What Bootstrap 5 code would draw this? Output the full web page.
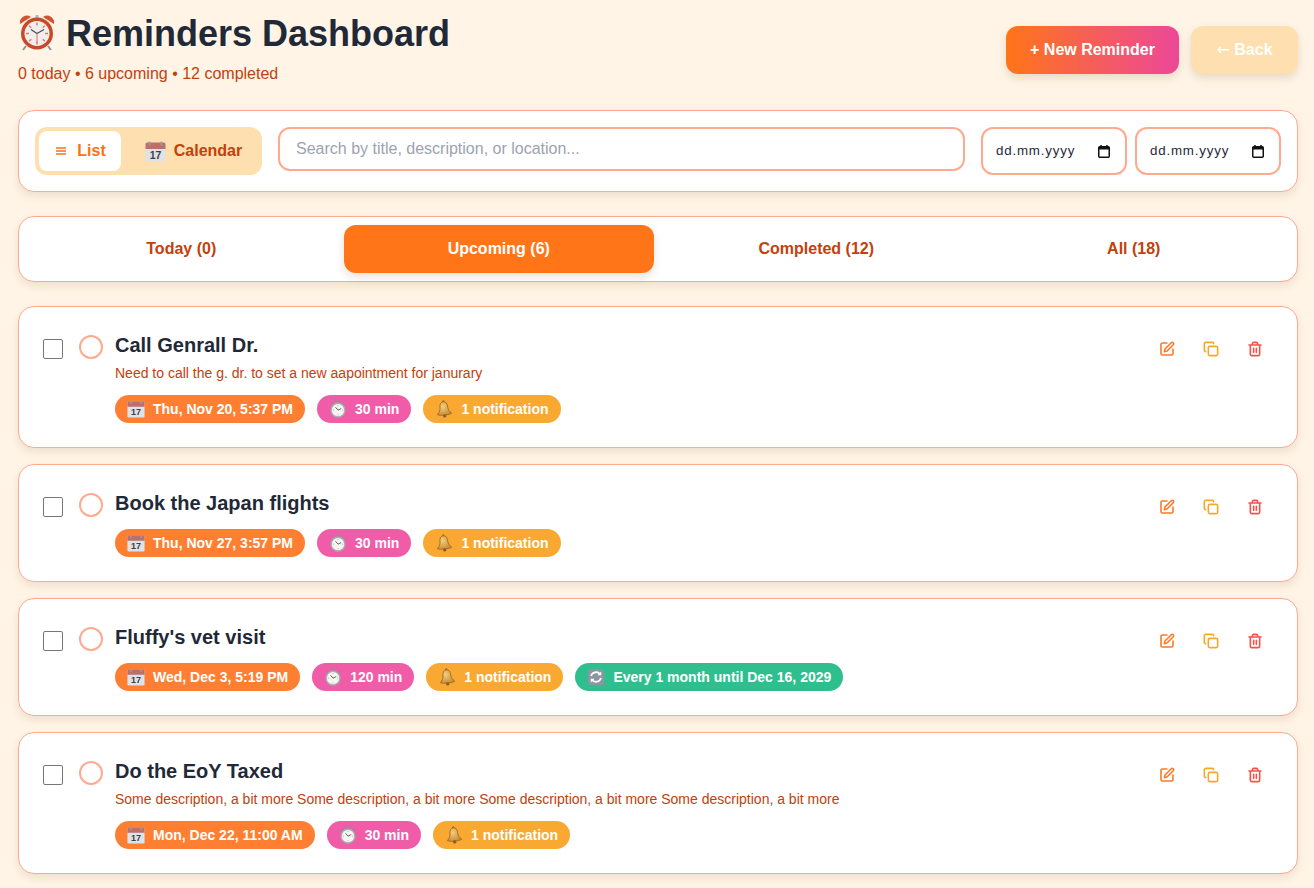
<!DOCTYPE html>
<html lang="en">
<head>
<meta charset="utf-8">
<title>Reminders Dashboard</title>
<link rel="stylesheet" href="https://cdn.jsdelivr.net/npm/bootstrap@5.3.0/dist/css/bootstrap.min.css">
<style>
body{background:#fff4e6;font-family:"Liberation Sans",Arial,sans-serif;color:#1f2937;}
.page-wrap{padding:13px 16px 14px 18px;}
.head-zone{height:97px;}
.head-title{font-size:36px;line-height:40px;font-weight:700;color:#1f2937;margin:0;}
.head-sub{font-size:16px;line-height:24px;color:#c2410c;margin:8px 0 0;}
.alarm-ico{width:38px;height:38px;margin-right:10px;vertical-align:-5px;}
.head-actions{padding-top:13px;}
.act-btn{height:48px;border:0;border-radius:12px;color:#fff;font-weight:700;font-size:16px;box-shadow:0 4px 8px rgba(120,80,40,.16);padding:0;}
.act-new{width:173px;background:linear-gradient(90deg,#ff7518,#ec4899);}
.act-back{width:107px;background:#fedfb0;}
.arrow-glyph{font-family:"DejaVu Sans",sans-serif;font-weight:400;}
.panel-box{background:#fff;border:1px solid #ffa98f;border-radius:16px;box-shadow:0 4px 8px rgba(120,80,40,.12);}
.tool-box{padding:16px;margin-bottom:24px;height:82px;}
.view-toggle{background:#fedfb0;border-radius:12px;padding:4px;height:48px;width:227px;flex:none;gap:8px;}
.view-opt{height:40px;border:0;border-radius:8px;background:transparent;font-weight:700;font-size:16px;color:#c2410c;padding:0;}
.view-opt.on{background:#fff;color:#f97316;width:82px;padding-left:2px;}
.view-opt.off{width:129px;}
.menu-ico{width:10px;height:8px;margin-right:11px;}
.cal-ico{width:18px;height:18px;flex:none;}
.cal-lg{width:21px;height:21px;margin-right:8px;}
.find-input{height:44px;border:2px solid #ffa98f;border-radius:12px;font-size:16px;padding:0 16px;color:#1f2937;margin:0 16px;width:687px;align-self:flex-start;}
.find-input::placeholder{color:#9ca3af;}
.day-field{height:48px;width:146px;border:2px solid #ffa98f;border-radius:12px;padding:0 15px 0 13px;background:#fff;}
.day-text{width:100%;min-width:0;border:0;outline:0;padding:0;background:transparent;font-size:13.33px;letter-spacing:.8px;color:#1f2937;}
.day-text::placeholder{color:#1f2937;opacity:1;}
.day-pick{width:12px;height:13px;flex:none;}
.tab-box{padding:8px 8.5px 8px 7.5px;margin-bottom:24px;height:66px;}
.tab-opt{flex:1 1 0;height:48px;border:0;border-radius:12px;background:transparent;color:#c2410c;font-weight:700;font-size:16px;}
.tab-opt.on{background:#ff7518;color:#fff;box-shadow:0 4px 8px rgba(120,80,40,.16);}
.item-box{padding:24px;margin-bottom:16px;}
.item-check{width:20px;height:20px;margin:8px 16px 0 0;border:1px solid #767676;border-radius:2px;flex:none;background:#fff;display:block;appearance:none;}
.item-ring{width:24px;height:24px;border:2px solid #ffa98f;border-radius:50%;margin:4px 12px 0 0;flex:none;background:#fff;}
.item-name{font-size:20px;line-height:28px;font-weight:700;color:#1f2937;margin:0;}
.item-note{font-size:14px;line-height:20px;color:#c2410c;margin:4px 0 0;}
.tag-pill{height:28px;border-radius:14px;padding:0 12px;color:#fff;font-size:14px;font-weight:700;white-space:nowrap;}
.tag-pill svg{margin-right:8px;}
.pill-date{background:#ff7f32;}
.pill-dur{background:#f05ca8;}
.pill-note{background:#f9a832;}
.pill-rep{background:#2fbf8f;}
.tool-btn{width:36px;height:36px;border:0;background:transparent;padding:0;}
.tool-btn svg{width:16px;height:16px;display:block;}
.clr-edit{color:#fb7a28;}
.clr-copy{color:#f9a825;}
.clr-del{color:#f5524a;}
</style>
</head>
<body>
<svg width="0" height="0" class="position-absolute">
<defs>
<radialGradient id="g-bell" cx="40%" cy="35%" r="70%"><stop offset="0" stop-color="#f3cf7c"/><stop offset="1" stop-color="#c98a35"/></radialGradient>
<symbol id="e-cal" viewBox="0 0 20 20">
<rect x="0.500" y="1.500" width="19" height="18" rx="1.500" fill="#dfe2e6"/>
<path d="M.5 3A1.500 1.500 0 0 1 2 1.500h16A1.500 1.500 0 0 1 19.500 3v4.500H.5z" fill="#b9716a"/>
<rect x="3.500" y="0.500" width="1.600" height="4" fill="#9a9ea3"/><rect x="14.900" y="0.500" width="1.600" height="4" fill="#9a9ea3"/>
<text x="10" y="17" font-family="Liberation Sans" font-size="10" text-anchor="middle" fill="#3c4148">17</text>
</symbol>
<symbol id="e-watch" viewBox="0 0 20 20">
<rect x="8.300" y="0.300" width="3.400" height="2.500" rx=".6" fill="#8d9094"/>
<path d="M15.200 2.800l2.300 2.300-1.200 1.200-2.300-2.300zM4.800 2.800L2.500 5.100l1.200 1.200 2.300-2.300z" fill="#8d9094"/>
<circle cx="10" cy="11.300" r="8.400" fill="#a9acb0"/><circle cx="10" cy="11.300" r="6.800" fill="#f7f5f0"/>
<path d="M10 11.300L7.200 8M10 11.300l3.600-1.800" stroke="#55585c" stroke-width="1" fill="none"/>
<path d="M10 5.500v1.300M10 15.800v1.300M4.200 11.300h1.300M14.500 11.300h1.300" stroke="#9a9da1" stroke-width=".8"/>
</symbol>
<symbol id="e-bell" viewBox="0 0 20 20">
<g transform="rotate(-6 10 10)">
<rect x="8.600" y=".4" width="2.800" height="2.600" rx="1" fill="#a8702c"/>
<path d="M10 2c-3 0-4.200 2.500-4.200 5.200 0 3.800-1.300 6-3.800 8.300 2.500 1.700 13.500 1.700 16 0-2.500-2.300-3.800-4.500-3.800-8.300C14.200 4.500 13 2 10 2z" fill="url(#g-bell)" stroke="#9c6526" stroke-width=".9"/>
<circle cx="10" cy="17.700" r="1.900" fill="#8f5d25"/>
</g>
</symbol>
<symbol id="e-rep" viewBox="0 0 20 20">
<rect x="1" y="1" width="18" height="18" rx="3" fill="#8b96a3"/>
<path d="M4.500 9a5.600 5.600 0 0 1 10-2M15.500 11a5.600 5.600 0 0 1-10 2" stroke="#fff" stroke-width="1.900" fill="none"/>
<path d="M15.800 3.800v4.200h-4.200zM4.200 16.200v-4.200h4.200z" fill="#fff"/>
</symbol>
<symbol id="i-edit" viewBox="0 0 24 24"><path d="M12 3H5a2 2 0 0 0-2 2v14a2 2 0 0 0 2 2h14a2 2 0 0 0 2-2v-7" fill="none" stroke="currentColor" stroke-width="2.400" stroke-linecap="round" stroke-linejoin="round"/><path d="M18.400 2.600a2.100 2.100 0 1 1 3 3L12 15l-4 1 1-4z" fill="none" stroke="currentColor" stroke-width="2.400" stroke-linecap="round" stroke-linejoin="round"/></symbol>
<symbol id="i-copy" viewBox="0 0 24 24"><rect x="8" y="8" width="14" height="14" rx="2.500" fill="none" stroke="currentColor" stroke-width="2.400"/><path d="M4 16c-1.100 0-2-.9-2-2V4c0-1.100.9-2 2-2h10c1.100 0 2 .9 2 2" fill="none" stroke="currentColor" stroke-width="2.400" stroke-linecap="round"/></symbol>
<symbol id="i-del" viewBox="0 0 24 24"><path d="M3 6h18M19 6v14a2 2 0 0 1-2 2H7a2 2 0 0 1-2-2V6M8 6V4a2 2 0 0 1 2-2h4a2 2 0 0 1 2 2v2M10 11v6M14 11v6" fill="none" stroke="currentColor" stroke-width="2.400" stroke-linecap="round" stroke-linejoin="round"/></symbol>
<symbol id="i-pick" viewBox="0 0 12 13"><path d="M3 0v2M9 0v2" stroke="#111" stroke-width="1.500"/><rect x=".75" y="1.750" width="10.500" height="10.500" rx="1" fill="none" stroke="#111" stroke-width="1.500"/><rect x="1" y="2" width="10" height="2.500" fill="#111"/></symbol>
</defs>
</svg>
<div class="page-wrap">
  <header class="head-zone d-flex justify-content-between align-items-start">
    <div>
      <h1 class="head-title">
        <svg class="alarm-ico" viewBox="0 0 38 38" aria-hidden="true">
          <path d="M8 33l-3 4M30 33l3 4" stroke="#8f9499" stroke-width="2"/>
          <path d="M2 11a7 7 0 0 1 11-7zM36 11a7 7 0 0 0-11-7z" fill="#d4532f"/>
          <rect x="17.500" y="2" width="3" height="4" fill="#b3b6ba"/>
          <circle cx="19" cy="20.500" r="16" fill="#c8492a"/>
          <circle cx="19" cy="20.500" r="12.500" fill="#f1efed"/>
          <path d="M19 9.500v3M19 28.500v3M8 20.500h3M27 20.500h3M11.200 12.700l2 2M26.800 12.700l-2 2M11.200 28.300l2-2M26.800 28.300l-2-2" stroke="#e0795f" stroke-width="1.400"/>
          <path d="M19 20.500l-6-4M19 20.500l7-4" stroke="#4a4f57" stroke-width="1.300" fill="none"/>
          <path d="M19 20.500v9" stroke="#d4532f" stroke-width=".8"/>
        </svg>Reminders Dashboard</h1>
      <p class="head-sub">0 today • 6 upcoming • 12 completed</p>
    </div>
    <div class="head-actions d-flex gap-2">
      <button class="act-btn act-new btn" type="button">+ New Reminder</button>
      <button class="act-btn act-back btn ms-1" type="button"><span class="arrow-glyph">←</span> Back</button>
    </div>
  </header>

  <section class="panel-box tool-box d-flex align-items-start">
    <div class="view-toggle d-flex">
      <button class="view-opt on d-flex align-items-center justify-content-center" type="button">
        <svg class="menu-ico" viewBox="0 0 10 8" aria-hidden="true"><path d="M0 1h10M0 4h10M0 7h10" stroke="#f97316" stroke-width="1.400"/></svg>List</button>
      <button class="view-opt off d-flex align-items-center justify-content-center" type="button">
        <svg class="cal-lg" aria-hidden="true"><use href="#e-cal"/></svg>Calendar</button>
    </div>
    <input class="find-input form-control" type="text" placeholder="Search by title, description, or location...">
    <div class="d-flex gap-2">
      <div class="day-field d-flex align-items-center"><input class="day-text" type="text" placeholder="dd.mm.yyyy" aria-label="From"><svg class="day-pick" aria-hidden="true"><use href="#i-pick"/></svg></div>
      <div class="day-field d-flex align-items-center"><input class="day-text" type="text" placeholder="dd.mm.yyyy" aria-label="To"><svg class="day-pick" aria-hidden="true"><use href="#i-pick"/></svg></div>
    </div>
  </section>

  <nav class="panel-box tab-box d-flex gap-2">
    <button class="tab-opt" type="button">Today (0)</button>
    <button class="tab-opt on" type="button">Upcoming (6)</button>
    <button class="tab-opt" type="button">Completed (12)</button>
    <button class="tab-opt" type="button">All (18)</button>
  </nav>

  <article class="panel-box item-box d-flex">
    <input class="item-check" type="checkbox" aria-label="Select">
    <div class="item-ring"></div>
    <div class="flex-grow-1">
      <h3 class="item-name">Call Genrall Dr.</h3>
      <p class="item-note">Need to call the g. dr. to set a new aapointment for janurary</p>
      <div class="d-flex gap-2 mt-2 pt-1">
        <span class="tag-pill pill-date d-inline-flex align-items-center"><svg class="cal-ico"><use href="#e-cal"/></svg>Thu, Nov 20, 5:37 PM</span>
        <span class="tag-pill pill-dur d-inline-flex align-items-center ms-1"><svg class="cal-ico"><use href="#e-watch"/></svg>30 min</span>
        <span class="tag-pill pill-note d-inline-flex align-items-center ms-1"><svg class="cal-ico"><use href="#e-bell"/></svg>1 notification</span>
      </div>
    </div>
    <div class="d-flex gap-2">
      <button class="tool-btn clr-edit d-flex align-items-center justify-content-center" type="button" aria-label="Edit"><svg><use href="#i-edit"/></svg></button>
      <button class="tool-btn clr-copy d-flex align-items-center justify-content-center" type="button" aria-label="Copy"><svg><use href="#i-copy"/></svg></button>
      <button class="tool-btn clr-del d-flex align-items-center justify-content-center" type="button" aria-label="Delete"><svg><use href="#i-del"/></svg></button>
    </div>
  </article>

  <article class="panel-box item-box d-flex">
    <input class="item-check" type="checkbox" aria-label="Select">
    <div class="item-ring"></div>
    <div class="flex-grow-1">
      <h3 class="item-name">Book the Japan flights</h3>
      <div class="d-flex gap-2 mt-2 pt-1">
        <span class="tag-pill pill-date d-inline-flex align-items-center"><svg class="cal-ico"><use href="#e-cal"/></svg>Thu, Nov 27, 3:57 PM</span>
        <span class="tag-pill pill-dur d-inline-flex align-items-center ms-1"><svg class="cal-ico"><use href="#e-watch"/></svg>30 min</span>
        <span class="tag-pill pill-note d-inline-flex align-items-center ms-1"><svg class="cal-ico"><use href="#e-bell"/></svg>1 notification</span>
      </div>
    </div>
    <div class="d-flex gap-2">
      <button class="tool-btn clr-edit d-flex align-items-center justify-content-center" type="button" aria-label="Edit"><svg><use href="#i-edit"/></svg></button>
      <button class="tool-btn clr-copy d-flex align-items-center justify-content-center" type="button" aria-label="Copy"><svg><use href="#i-copy"/></svg></button>
      <button class="tool-btn clr-del d-flex align-items-center justify-content-center" type="button" aria-label="Delete"><svg><use href="#i-del"/></svg></button>
    </div>
  </article>

  <article class="panel-box item-box d-flex">
    <input class="item-check" type="checkbox" aria-label="Select">
    <div class="item-ring"></div>
    <div class="flex-grow-1">
      <h3 class="item-name">Fluffy's vet visit</h3>
      <div class="d-flex gap-2 mt-2 pt-1">
        <span class="tag-pill pill-date d-inline-flex align-items-center"><svg class="cal-ico"><use href="#e-cal"/></svg>Wed, Dec 3, 5:19 PM</span>
        <span class="tag-pill pill-dur d-inline-flex align-items-center ms-1"><svg class="cal-ico"><use href="#e-watch"/></svg>120 min</span>
        <span class="tag-pill pill-note d-inline-flex align-items-center ms-1"><svg class="cal-ico"><use href="#e-bell"/></svg>1 notification</span>
        <span class="tag-pill pill-rep d-inline-flex align-items-center ms-1"><svg class="cal-ico"><use href="#e-rep"/></svg>Every 1 month until Dec 16, 2029</span>
      </div>
    </div>
    <div class="d-flex gap-2">
      <button class="tool-btn clr-edit d-flex align-items-center justify-content-center" type="button" aria-label="Edit"><svg><use href="#i-edit"/></svg></button>
      <button class="tool-btn clr-copy d-flex align-items-center justify-content-center" type="button" aria-label="Copy"><svg><use href="#i-copy"/></svg></button>
      <button class="tool-btn clr-del d-flex align-items-center justify-content-center" type="button" aria-label="Delete"><svg><use href="#i-del"/></svg></button>
    </div>
  </article>

  <article class="panel-box item-box d-flex">
    <input class="item-check" type="checkbox" aria-label="Select">
    <div class="item-ring"></div>
    <div class="flex-grow-1">
      <h3 class="item-name">Do the EoY Taxed</h3>
      <p class="item-note">Some description, a bit more Some description, a bit more Some description, a bit more Some description, a bit more</p>
      <div class="d-flex gap-2 mt-2 pt-1">
        <span class="tag-pill pill-date d-inline-flex align-items-center"><svg class="cal-ico"><use href="#e-cal"/></svg>Mon, Dec 22, 11:00 AM</span>
        <span class="tag-pill pill-dur d-inline-flex align-items-center ms-1"><svg class="cal-ico"><use href="#e-watch"/></svg>30 min</span>
        <span class="tag-pill pill-note d-inline-flex align-items-center ms-1"><svg class="cal-ico"><use href="#e-bell"/></svg>1 notification</span>
      </div>
    </div>
    <div class="d-flex gap-2">
      <button class="tool-btn clr-edit d-flex align-items-center justify-content-center" type="button" aria-label="Edit"><svg><use href="#i-edit"/></svg></button>
      <button class="tool-btn clr-copy d-flex align-items-center justify-content-center" type="button" aria-label="Copy"><svg><use href="#i-copy"/></svg></button>
      <button class="tool-btn clr-del d-flex align-items-center justify-content-center" type="button" aria-label="Delete"><svg><use href="#i-del"/></svg></button>
    </div>
  </article>
</div>
<script src="https://cdn.jsdelivr.net/npm/bootstrap@5.3.0/dist/js/bootstrap.bundle.min.js"></script>
</body>
</html>
